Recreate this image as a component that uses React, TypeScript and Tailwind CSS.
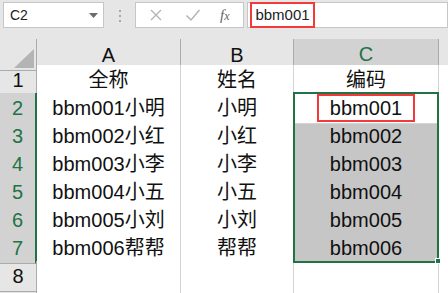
const rows = [
  { a: 'bbm001小明', b: '小明', c: 'bbm001' },
  { a: 'bbm002小红', b: '小红', c: 'bbm002' },
  { a: 'bbm003小李', b: '小李', c: 'bbm003' },
  { a: 'bbm004小五', b: '小五', c: 'bbm004' },
  { a: 'bbm005小刘', b: '小刘', c: 'bbm005' },
  { a: 'bbm006帮帮', b: '帮帮', c: 'bbm006' },
];

const cols = 'grid grid-cols-[37px_144px_113px_145px_9px]';

export default function App() {
  return (
    <div className="relative w-[448px] h-[293px] overflow-hidden bg-[#e6e6e6] font-['Liberation_Sans','Noto_Sans_CJK_SC',sans-serif] text-[#111]">
      {/* Formula bar */}
      <div className="flex h-[39px] items-start pt-[2px]">
        <div className="ml-[3px] flex h-[26px] w-[101px] items-center justify-between border border-[#c6c6c6] bg-white pl-[6px] pr-[5px]">
          <span className="text-[14px] text-[#222]">C2</span>
          <svg width="9" height="5" viewBox="0 0 9 5">
            <path d="M0 0h9L4.5 5z" fill="#6b6b6b" />
          </svg>
        </div>
        <div className="flex w-[31px] flex-col items-center gap-[3px] pt-[8px]">
          <span className="h-[2px] w-[2px] bg-[#a8a8a8]" />
          <span className="h-[2px] w-[2px] bg-[#a8a8a8]" />
          <span className="h-[2px] w-[2px] bg-[#a8a8a8]" />
        </div>
        <div className="flex h-[26px] w-[109px] items-center border border-[#c6c6c6] bg-white">
          <svg className="ml-[13px]" width="14" height="14" viewBox="0 0 14 14">
            <path d="M2 2l10 10M12 2L2 12" stroke="#b5b5b5" strokeWidth="1.4" />
          </svg>
          <svg className="ml-[22px]" width="16" height="14" viewBox="0 0 16 14">
            <path d="M1.5 7.5l4.5 4.5L14.5 2" stroke="#b5b5b5" strokeWidth="1.5" fill="none" />
          </svg>
          <span className="ml-[19px] font-['Liberation_Serif',serif] text-[15px] italic text-[#666]">
            f<span className="text-[12px]">x</span>
          </span>
        </div>
        <div className="ml-[3px] flex h-[26px] flex-1 items-center border border-[#c6c6c6] bg-white">
          <span className="ml-[2px] flex h-[26px] w-[65px] items-center justify-center border-2 border-[#f23a3a] text-[15px] text-[#222]">
            bbm001
          </span>
        </div>
      </div>

      {/* Column headers */}
      <div className={`${cols} h-[26px] text-[20px]`}>
        <div className="flex items-end justify-end border-r border-b border-[#ababab] pb-[2px] pr-[2px]">
          <svg width="20" height="19" viewBox="0 0 20 19">
            <path d="M20 0V19H0z" fill="#b4b4b4" />
          </svg>
        </div>
        <div className="flex items-center justify-center border-r border-b border-[#ababab]">A</div>
        <div className="flex items-center justify-center border-r border-b border-[#ababab]">B</div>
        <div className="flex items-center justify-center border-r border-b-2 border-r-[#ababab] border-b-[#217346] bg-[#d2d2d2] text-[#217346]">
          C
        </div>
        <div className="border-b border-[#ababab]" />
      </div>

      {/* Row 1 */}
      <div className={`${cols} h-[28px] text-[20px]`}>
        <div className="flex items-center justify-center border-r border-b border-[#ababab]">1</div>
        <div className="flex items-center justify-center border-r border-b border-[#d4d4d4] bg-white">全称</div>
        <div className="flex items-center justify-center border-r border-b border-[#d4d4d4] bg-white">姓名</div>
        <div className="flex items-center justify-center border-r border-b border-[#d4d4d4] bg-white">编码</div>
        <div className="border-b border-[#d4d4d4] bg-white" />
      </div>

      {/* Data rows */}
      {rows.map((r, i) => (
        <div key={r.c} className={`${cols} h-[28px] text-[20px]`}>
          <div className="flex items-center justify-center border-r-2 border-b border-r-[#217346] border-b-[#ababab] bg-[#d2d2d2] text-[#217346]">
            {i + 2}
          </div>
          <div className="flex items-center justify-center border-r border-b border-[#d4d4d4] bg-white">{r.a}</div>
          <div className="flex items-center justify-center border-r border-b border-[#d4d4d4] bg-white">{r.b}</div>
          {i === 0 ? (
            <div className="relative flex items-start justify-center border-r border-b border-[#d4d4d4] bg-white">
              <span className="relative z-10 mt-[1px] flex h-[28px] w-[98px] items-center justify-center border-2 border-[#f23a3a]">
                {r.c}
              </span>
            </div>
          ) : (
            <div className="flex items-center justify-center border-r border-b border-[#ababab] bg-[#c6c6c6]">{r.c}</div>
          )}
          <div className="border-b border-[#d4d4d4] bg-white" />
        </div>
      ))}

      {/* Row 8 and the edge of row 9 */}
      {['8', ''].map((n) => (
        <div key={n} className={`${cols} h-[28px] text-[20px]`}>
          <div className="flex items-center justify-center border-r border-b border-[#ababab]">{n}</div>
          <div className="border-r border-b border-[#d4d4d4] bg-white" />
          <div className="border-r border-b border-[#d4d4d4] bg-white" />
          <div className="border-r border-b border-[#d4d4d4] bg-white" />
          <div className="border-b border-[#d4d4d4] bg-white" />
        </div>
      ))}

      {/* Selection */}
      <div className="pointer-events-none absolute left-[293px] top-[92px] h-[171px] w-[146px] border-2 border-[#217346]" />
      <div className="absolute left-[435px] top-[258px] h-[6px] w-[6px] border border-white bg-[#217346]" />
    </div>
  );
}
